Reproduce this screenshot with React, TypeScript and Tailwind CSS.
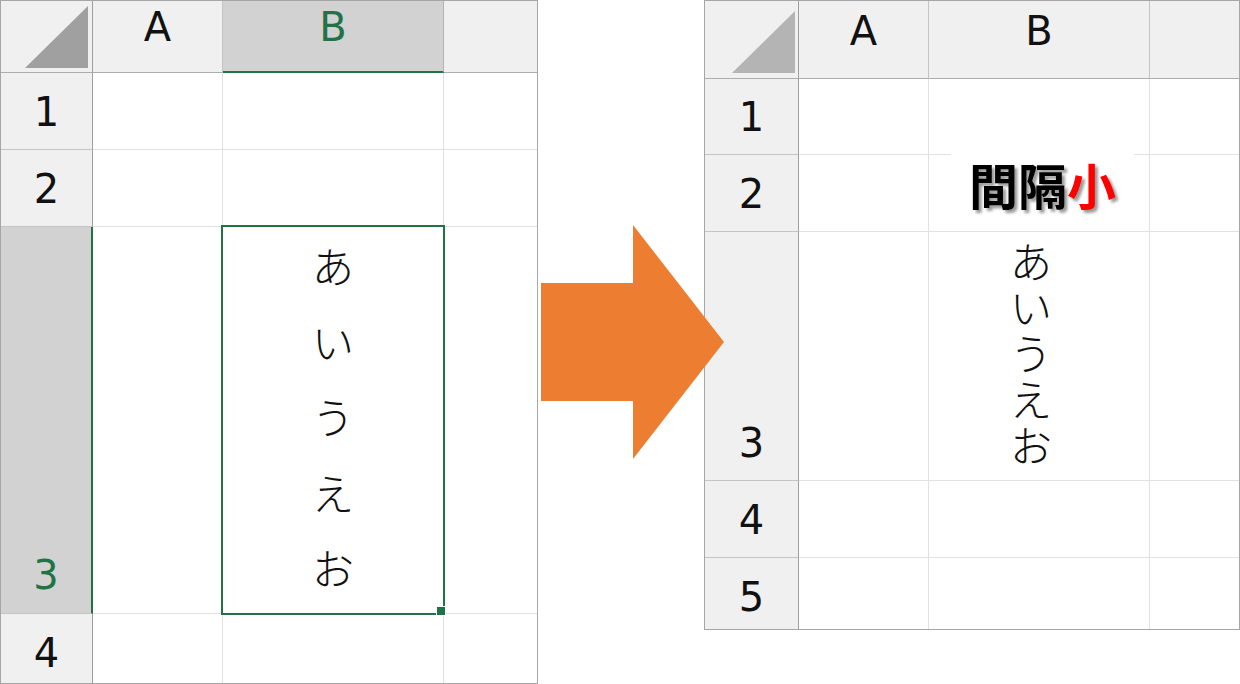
import React from 'react';

const hdrFont = { fontFamily: '"DejaVu Sans", "Liberation Sans", sans-serif' };
const jpFont = { fontFamily: '"Noto Sans CJK JP", "Noto Sans", sans-serif' };

// one character per line, kept as a single text block
const kana = 'あ\nい\nう\nえ\nお';

function Corner({ fill, pad }: { fill: string; pad: string }) {
  return (
    <div className={`flex items-end justify-end bg-[#f0f0f0] border-r border-b border-r-[#9f9f9f] border-b-[#adadad] ${pad}`}>
      <svg width="63" height="62" viewBox="0 0 63 62">
        <polygon points="0,62 63,0 63,62" fill={fill} />
      </svg>
    </div>
  );
}

function LeftSheet() {
  const rowHead = 'flex items-end justify-center pb-[17px] bg-[#f0f0f0] border-r border-b border-r-[#9f9f9f] border-b-[#c4c4c4] text-[40px] leading-none text-[#111]';
  const colHead = 'flex justify-center pt-[6px] bg-[#f0f0f0] border-r border-b border-r-[#c4c4c4] border-b-[#adadad] text-[40px] leading-none text-[#111]';
  const cell = 'bg-white border-r border-b border-[#e1e1e1]';

  return (
    <div className="h-[684px] w-[538px] shrink-0 overflow-hidden border border-[#a6a6a6] bg-white" style={hdrFont}>
      <div className="grid grid-cols-[92px_130px_221px_1fr] grid-rows-[72px_77px_77px_387px_77px]">
        <Corner fill="#a0a0a0" pad="pr-[4px] pb-[4px]" />
        <div className={colHead}>A</div>
        <div className="flex justify-center pt-[6px] bg-[#d2d2d2] border-r border-r-[#b4b4b4] border-b-2 border-b-[#217346] text-[40px] leading-none text-[#217346]">B</div>
        <div className={`${colHead} border-r-0`}></div>

        <div className={rowHead}>1</div>
        <div className={cell}></div>
        <div className={cell}></div>
        <div className={`${cell} border-r-0`}></div>

        <div className={rowHead}>2</div>
        <div className={cell}></div>
        <div className={cell}></div>
        <div className={`${cell} border-r-0`}></div>

        <div className="flex items-end justify-center pb-[18px] bg-[#d2d2d2] border-r-2 border-b border-r-[#217346] border-b-[#c4c4c4] text-[40px] leading-none text-[#217346]">3</div>
        <div className={cell}></div>
        <div className={`${cell} relative flex flex-col items-center`} style={jpFont}>
          <div className="whitespace-pre-line text-center text-[42px] leading-[75.5px] font-light text-[#111]">{kana}</div>
          <div className="absolute -left-[2px] -top-[2px] h-[390px] w-[224px] border-2 border-[#217346]"></div>
          <div className="absolute left-[213px] top-[379px] h-[10px] w-[10px] border border-white bg-[#217346]"></div>
        </div>
        <div className={`${cell} border-r-0`}></div>

        <div className={rowHead}>4</div>
        <div className={cell}></div>
        <div className={cell}></div>
        <div className={`${cell} border-r-0`}></div>
      </div>
    </div>
  );
}

function RightSheet() {
  const rowHead = 'flex items-end justify-center pb-[17px] bg-[#f0f0f0] border-r border-b border-r-[#9f9f9f] border-b-[#c4c4c4] text-[40px] leading-none text-[#111]';
  const colHead = 'flex justify-center pt-[10px] bg-[#f0f0f0] border-r border-b border-r-[#c4c4c4] border-b-[#adadad] text-[40px] leading-none text-[#111]';
  const cell = 'bg-white border-r border-b border-[#e1e1e1]';
  const rows = ['1', '2', '3', '4', '5'];

  return (
    <div className="relative h-[630px] w-[536px] shrink-0 overflow-hidden border border-[#a6a6a6] bg-white" style={hdrFont}>
      <div className="grid grid-cols-[94px_130px_221px_1fr] grid-rows-[78px_76px_77px_249px_77px_77px]">
        <Corner fill="#b4b4b4" pad="pr-[3px] pb-[5px]" />
        <div className={colHead}>A</div>
        <div className={colHead}>B</div>
        <div className={`${colHead} border-r-0`}></div>

        {rows.map((r) => (
          <React.Fragment key={r}>
            <div className={rowHead}>{r}</div>
            <div className={cell}></div>
            {r === '3' ? (
              <div className={`${cell} flex flex-col items-center pt-[5px] pr-[16px]`} style={jpFont}>
                <div className="whitespace-pre-line text-center text-[42px] leading-[46px] font-light text-[#111]">{kana}</div>
              </div>
            ) : (
              <div className={cell}></div>
            )}
            <div className={`${cell} border-r-0`}></div>
          </React.Fragment>
        ))}
      </div>

      {/* label sitting over the grid */}
      <div className="absolute left-[246px] top-[145px] flex h-[74px] w-[183px] items-center justify-center bg-white" style={jpFont}>
        <span className="text-[49px] font-bold leading-none text-black [text-shadow:3px_3px_3px_rgba(0,0,0,0.4)]">
          間隔<span className="text-[#ff0000]">小</span>
        </span>
      </div>
    </div>
  );
}

export default function App() {
  return (
    <div className="flex h-[684px] w-[1240px] items-start overflow-hidden bg-white">
      <LeftSheet />
      <div className="relative h-[684px] w-[166px] shrink-0">
        <svg className="absolute left-[3px] top-0 z-10" width="183" height="684" viewBox="0 0 183 684">
          <polygon points="0,283 92,283 92,225 183,342 92,459 92,401 0,401" fill="#ed7d31" />
        </svg>
      </div>
      <RightSheet />
    </div>
  );
}
